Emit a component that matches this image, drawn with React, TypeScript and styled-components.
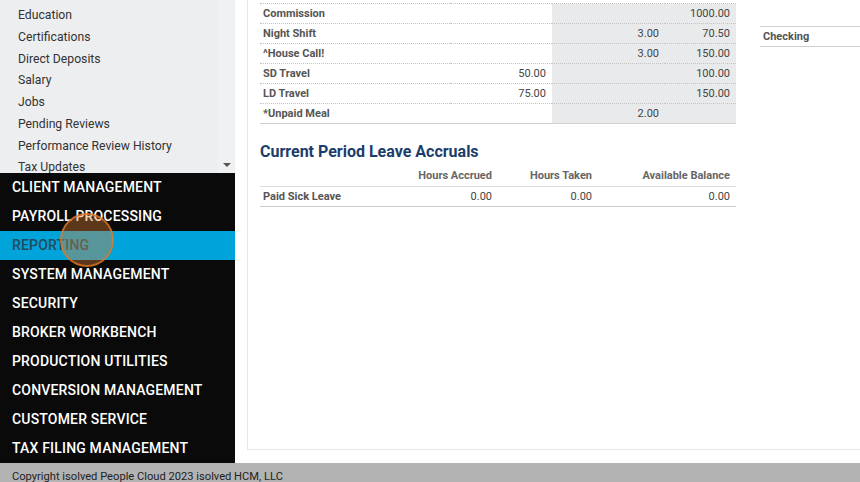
import React from "react";
import styled, { createGlobalStyle } from "styled-components";

const Global = createGlobalStyle`
  html, body { margin: 0; padding: 0; }
  body { font-family: Roboto, "Liberation Sans", Arial, sans-serif; background: #fff; }
  * { box-sizing: border-box; }
`;

const Page = styled.div`
  width: 860px;
  height: 482px;
  display: grid;
  grid-template-rows: 1fr 19px;
  overflow: hidden;
  position: relative;
`;

const Top = styled.div`
  display: flex;
  min-height: 0;
`;

const Sidebar = styled.aside`
  width: 235px;
  flex: none;
  display: flex;
  flex-direction: column;
`;

const SubArea = styled.div`
  height: 173px;
  display: flex;
  background: #edeef0;
  overflow: hidden;
`;

const SubList = styled.ul`
  list-style: none;
  margin: 0;
  padding: 5px 0 0 18px;
  flex: 1;
  overflow: hidden;
`;

const SubItem = styled.li`
  font-size: 12.2px;
  line-height: 21.75px;
  color: #333;
  white-space: nowrap;
`;

const ScrollTrack = styled.div`
  width: 17px;
  background: #f0f1f2;
  display: flex;
  flex-direction: column;
  justify-content: flex-end;
  align-items: center;
  padding-bottom: 6px;
`;

const ArrowDown = styled.div`
  width: 0;
  height: 0;
  border-left: 4px solid transparent;
  border-right: 4px solid transparent;
  border-top: 4px solid #555;
`;

const Menu = styled.nav`
  flex: 1;
  background: #0a0a0a;
  display: flex;
  flex-direction: column;
`;

const MenuItem = styled.div<{ $active?: boolean }>`
  height: 29px;
  line-height: 29px;
  padding-left: 12px;
  font-size: 14px;
  font-weight: 500;
  letter-spacing: 0.18px;
  text-transform: uppercase;
  color: ${(p) => (p.$active ? "#244a5c" : "#fff")};
  background: ${(p) => (p.$active ? "#00a3da" : "transparent")};
  white-space: nowrap;
`;

const Main = styled.main`
  flex: 1;
  min-width: 0;
  padding: 0 0 13px 12px;
  display: flex;
`;

const Panel = styled.section`
  flex: 1;
  border-left: 1px solid #e6e6e6;
  border-bottom: 1px solid #e6e6e6;
  padding: 3px 0 0 12px;
  display: flex;
  gap: 24px;
  overflow: hidden;
`;

const LeftCol = styled.div`
  width: 476px;
  flex: none;
`;

const RightCol = styled.div`
  flex: 1;
  padding-top: 23px;
`;

const Table = styled.table`
  width: 100%;
  border-collapse: collapse;
  table-layout: fixed;
  font-size: 11px;
`;

const Row = styled.tr<{ $dotted?: boolean }>`
  height: 20px;
  border-top: ${(p) => (p.$dotted ? "1px dotted #c4c4c4" : "none")};
`;

const Name = styled.td`
  font-weight: 700;
  color: #555;
  padding: 0 3px;
  white-space: nowrap;
`;

const Num = styled.td<{ $shade?: boolean }>`
  text-align: right;
  color: #444;
  padding: 0 6px;
  background: ${(p) => (p.$shade ? "#e9eaec" : "transparent")};
`;

const EarnTable = styled(Table)`
  border-bottom: 1px solid #cfcfcf;
`;

const Heading = styled.h2`
  margin: 18px 0 4px 0;
  font-size: 16px;
  line-height: 20px;
  font-weight: 700;
  color: #1c3d6c;
`;

const HeadCell = styled.th`
  font-weight: 700;
  color: #666;
  text-align: right;
  padding: 0 6px;
  height: 20px;
  border-bottom: 1px solid #dcdcdc;
`;

const LeaveRow = styled.tr`
  height: 20px;
  border-bottom: 1px solid #cccccc;
`;

const AcctTable = styled(Table)`
  border-top: 1px solid #cfcfcf;
  border-bottom: 1px solid #cfcfcf;
`;

const Footer = styled.footer`
  background: #b3b3b3;
  padding: 7px 0 0 12px;
  font-size: 11.15px;
  line-height: 13px;
  color: #222;
  white-space: nowrap;
`;

const ClickMark = styled.div`
  position: absolute;
  left: 60px;
  top: 213px;
  width: 54px;
  height: 54px;
  border-radius: 50%;
  background: rgba(228, 128, 50, 0.38);
  border: 2px solid rgba(220, 120, 40, 0.75);
  pointer-events: none;
`;

const subItems = [
  "Education",
  "Certifications",
  "Direct Deposits",
  "Salary",
  "Jobs",
  "Pending Reviews",
  "Performance Review History",
  "Tax Updates",
];

const menuItems = [
  "Client Management",
  "Payroll Processing",
  "Reporting",
  "System Management",
  "Security",
  "Broker Workbench",
  "Production Utilities",
  "Conversion Management",
  "Customer Service",
  "Tax Filing Management",
];

const earnings: [string, string, string, string][] = [
  ["Commission", "", "", "1000.00"],
  ["Night Shift", "", "3.00", "70.50"],
  ["^House Call!", "", "3.00", "150.00"],
  ["SD Travel", "50.00", "", "100.00"],
  ["LD Travel", "75.00", "", "150.00"],
  ["*Unpaid Meal", "", "2.00", ""],
];

export default function App() {
  return (
    <>
      <Global />
      <Page>
        <Top>
          <Sidebar>
            <SubArea>
              <SubList>
                {subItems.map((s) => (
                  <SubItem key={s}>{s}</SubItem>
                ))}
              </SubList>
              <ScrollTrack>
                <ArrowDown />
              </ScrollTrack>
            </SubArea>
            <Menu>
              {menuItems.map((m) => (
                <MenuItem key={m} $active={m === "Reporting"}>
                  {m}
                </MenuItem>
              ))}
            </Menu>
          </Sidebar>
          <Main>
            <Panel>
              <LeftCol>
                <EarnTable>
                  <colgroup>
                    <col style={{ width: 190 }} />
                    <col style={{ width: 102 }} />
                    <col style={{ width: 113 }} />
                    <col style={{ width: 71 }} />
                  </colgroup>
                  <tbody>
                    {earnings.map((r) => (
                      <Row key={r[0]} $dotted>
                        <Name>{r[0]}</Name>
                        <Num>{r[1]}</Num>
                        <Num $shade>{r[2]}</Num>
                        <Num $shade>{r[3]}</Num>
                      </Row>
                    ))}
                  </tbody>
                </EarnTable>
                <Heading>Current Period Leave Accruals</Heading>
                <Table>
                  <colgroup>
                    <col style={{ width: 130 }} />
                    <col style={{ width: 108 }} />
                    <col style={{ width: 100 }} />
                    <col style={{ width: 138 }} />
                  </colgroup>
                  <thead>
                    <tr>
                      <HeadCell />
                      <HeadCell>Hours Accrued</HeadCell>
                      <HeadCell>Hours Taken</HeadCell>
                      <HeadCell>Available Balance</HeadCell>
                    </tr>
                  </thead>
                  <tbody>
                    <LeaveRow>
                      <Name>Paid Sick Leave</Name>
                      <Num>0.00</Num>
                      <Num>0.00</Num>
                      <Num>0.00</Num>
                    </LeaveRow>
                  </tbody>
                </Table>
              </LeftCol>
              <RightCol>
                <AcctTable>
                  <tbody>
                    <Row>
                      <Name>Checking</Name>
                    </Row>
                  </tbody>
                </AcctTable>
              </RightCol>
            </Panel>
          </Main>
        </Top>
        <Footer>Copyright isolved People Cloud 2023 isolved HCM, LLC</Footer>
        <ClickMark />
      </Page>
    </>
  );
}
